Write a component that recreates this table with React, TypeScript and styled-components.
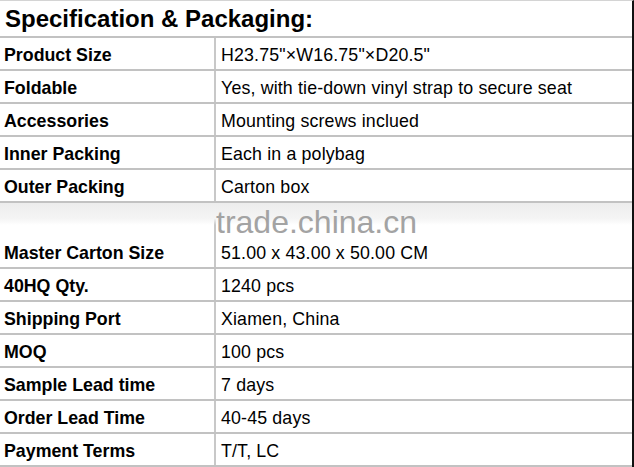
import styled, { createGlobalStyle } from "styled-components";

const GlobalStyle = createGlobalStyle`
  html, body {
    margin: 0;
    padding: 0;
    background: #ffffff;
  }
  body {
    font-family: "Liberation Sans", Arial, sans-serif;
    color: #000000;
  }
`;

const Sheet = styled.div`
  position: relative;
  width: 632px;
  height: 466px;
  border-top: 1px solid #d4d4d4;
  border-right: 2px solid #111111;
  overflow: hidden;
`;

const Title = styled.h1`
  margin: 0;
  height: 35px;
  padding-left: 5px;
  display: flex;
  align-items: center;
  font-size: 24px;
  font-weight: bold;
  border-bottom: 2px solid #c2c2c2;
`;

const Row = styled.div<{ $tall?: boolean }>`
  position: relative;
  display: grid;
  grid-template-columns: 216px 1fr;
  height: ${(p) => (p.$tall ? 64 : 31)}px;
  border-bottom: 2px solid #c2c2c2;
  font-size: 17.8px;
  white-space: nowrap;
`;

const Label = styled.div<{ $tall?: boolean }>`
  display: flex;
  align-items: ${(p) => (p.$tall ? "flex-end" : "center")};
  padding: ${(p) => (p.$tall ? "0 0 3px 4px" : "3px 0 0 4px")};
  font-weight: bold;
  border-right: 2px solid #c8c8c8;
`;

const Value = styled.div<{ $tall?: boolean }>`
  display: flex;
  align-items: ${(p) => (p.$tall ? "flex-end" : "center")};
  padding: ${(p) => (p.$tall ? "0 0 3px 5px" : "3px 0 0 5px")};
  letter-spacing: 0.15px;
`;

const Band = styled.div`
  position: absolute;
  left: 0;
  right: 0;
  top: 0;
  height: 22px;
  background: linear-gradient(180deg, #ededed 0%, #f4f4f4 70%, rgba(255, 255, 255, 0) 100%);
`;

const Watermark = styled.div`
  position: absolute;
  left: 216px;
  top: 1px;
  font-size: 32px;
  color: #a3a3a3;
`;

const rowsTop = [
  ["Product Size", "H23.75\"×W16.75\"×D20.5\""],
  ["Foldable", "Yes, with tie-down vinyl strap to secure seat"],
  ["Accessories", "Mounting screws inclued"],
  ["Inner Packing", "Each in a polybag"],
  ["Outer Packing", "Carton box"],
];

const rowsBottom = [
  ["40HQ Qty.", "1240 pcs"],
  ["Shipping Port", "Xiamen, China"],
  ["MOQ", "100 pcs"],
  ["Sample Lead time", "7 days"],
  ["Order Lead Time", "40-45 days"],
  ["Payment Terms", "T/T, LC"],
];

const App = () => {
  return (
    <>
      <GlobalStyle />
      <Sheet>
        <Title>Specification &amp; Packaging:</Title>
        {rowsTop.map(([k, v]) => (
          <Row key={k}>
            <Label>{k}</Label>
            <Value>{v}</Value>
          </Row>
        ))}
        <Row $tall>
          <Band />
          <Label $tall>Master Carton Size</Label>
          <Value $tall>51.00 x 43.00 x 50.00 CM</Value>
          <Watermark>trade.china.cn</Watermark>
        </Row>
        {rowsBottom.map(([k, v]) => (
          <Row key={k}>
            <Label>{k}</Label>
            <Value>{v}</Value>
          </Row>
        ))}
      </Sheet>
    </>
  );
};

export default App;
